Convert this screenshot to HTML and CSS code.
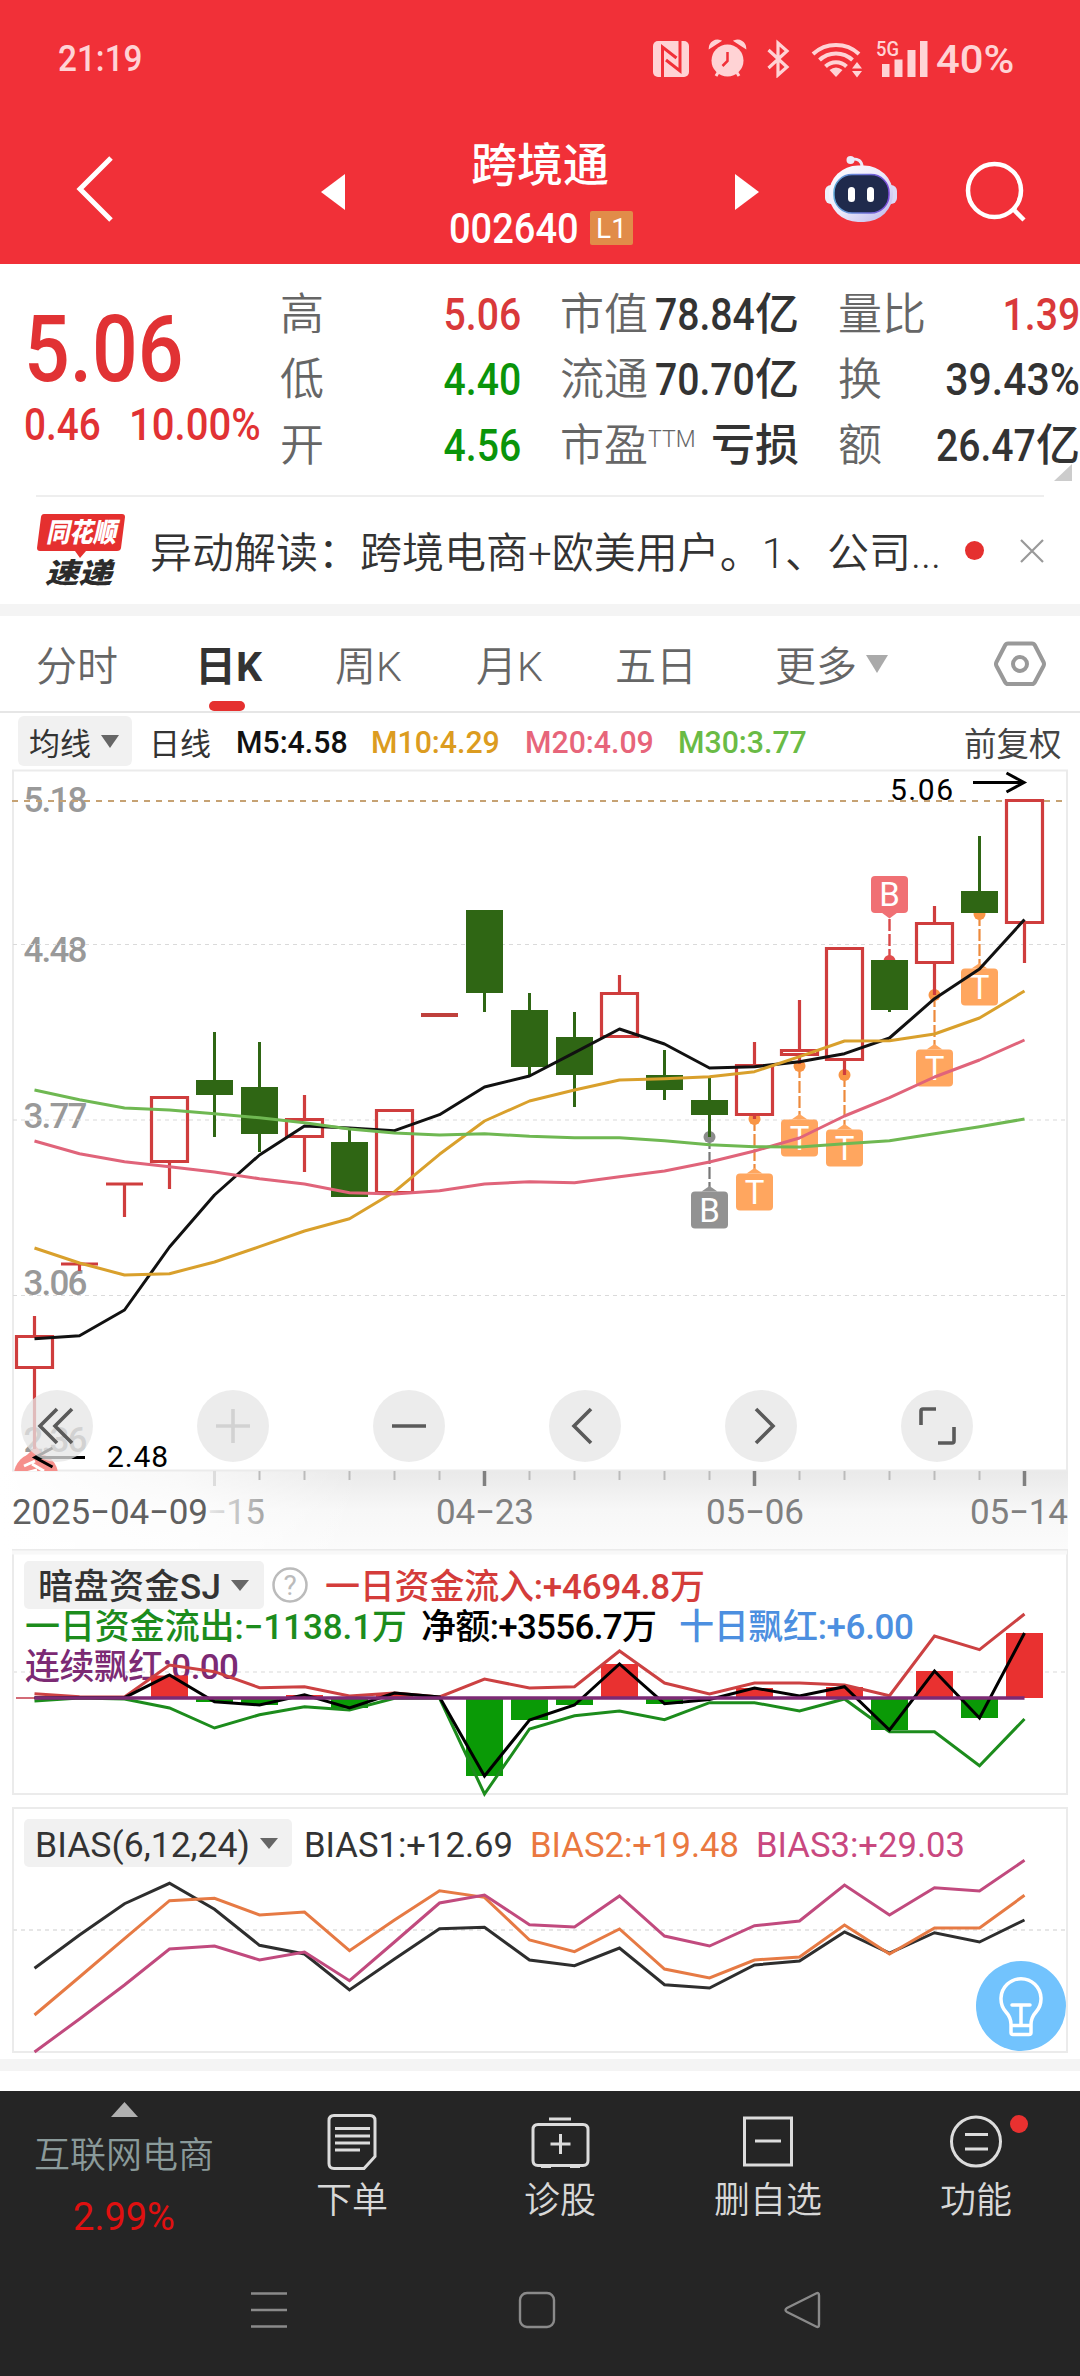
FILE: index.html
```html
<!DOCTYPE html>
<html lang="zh-CN">
<head>
<meta charset="utf-8">
<title>跨境通 002640</title>
<link rel="stylesheet" href="styles.css">
</head>
<body>
<header class="header">
  <div class="status">
    <span class="clock">21:19</span>
    <svg class="status-icons" viewBox="640 0 296 78" width="296" height="78" fill="#ffd3d5">
      <rect x="653" y="41" width="36" height="36" rx="5"/>
      <path d="M662.500 77V47l14 11M680 41V71l-14-11" fill="none" stroke="#f13038" stroke-width="3"/>
      <path d="M709.500 48a8 8 0 0 1 11-7zM745.500 48a8 8 0 0 0-11-7z" stroke="#ffd3d5" stroke-width="1.500"/>
      <circle cx="727.500" cy="60.500" r="16"/>
      <path d="M716 76l3-5M739 76l-3-5" stroke="#ffd3d5" stroke-width="3"/>
      <path d="M727.500 52v9l-5 5" fill="none" stroke="#f13038" stroke-width="2.500"/>
      <path d="M768.500 50L787 67l-9 8V43l9 8-18.500 17" fill="none" stroke="#ffd3d5" stroke-width="3.200"/>
      <g fill="none" stroke="#ffd3d5" stroke-width="4">
        <path d="M813 54a34 34 0 0 1 46 0M819.500 60a24 24 0 0 1 33 0M825.500 66.500a15 15 0 0 1 21 0"/>
      </g>
      <path d="M829.500 70q6.500-5 13 0L836 77z"/>
      <path d="M852 68.500l5-6.500 5 6.500zM852 71l5 6.500 5-6.500z"/>
      <text x="876" y="56" class="net" textLength="23" lengthAdjust="spacingAndGlyphs">5G</text>
      <path d="M882 64h7.500v13H882zM894.500 59.500h8V77h-8zM907.500 50h8v27h-8zM920 41h7.500v36H920z"/>
    </svg>
    <span class="battery">40%</span>
  </div>
  <nav class="nav">
    <svg viewBox="60 78 80 186" width="80" height="186"><path d="M111 158L80 189l31 31" fill="none" stroke="#fff" stroke-width="5"/></svg>
    <svg class="prev" viewBox="290 78 80 186" width="80" height="186"><path d="M345 174v36l-24-18z" fill="#fff"/></svg>
    <div class="title">
      <h1>跨境通</h1>
      <div class="code"><span class="code-num">002640</span><span class="badge">L1</span></div>
    </div>
    <svg viewBox="710 78 80 186" width="80" height="186"><path d="M735 174v36l24-18z" fill="#fff"/></svg>
    <svg viewBox="790 78 130 186" width="130" height="186">
      <defs>
        <linearGradient id="shell" x1="0" y1="0" x2="1" y2="1"><stop offset="0" stop-color="#fff"/><stop offset=".5" stop-color="#eceafb"/><stop offset="1" stop-color="#b9b4ea"/></linearGradient>
        <linearGradient id="visor" x1="0" y1="0" x2="1" y2="0"><stop offset="0" stop-color="#5fa8d8"/><stop offset="1" stop-color="#7a49d8"/></linearGradient>
      </defs>
      <path d="M851 159q11-1 11 8" fill="none" stroke="#eceaf8" stroke-width="3"/>
      <circle cx="850.500" cy="160" r="4" fill="#eceaf8"/>
      <rect x="825" y="185" width="14" height="19" rx="6" fill="#eef0fa"/>
      <rect x="883" y="185" width="14" height="19" rx="6" fill="#dcd9f6"/>
      <rect x="829" y="165.500" width="64" height="56.500" rx="29" fill="url(#shell)"/>
      <rect x="834" y="174.500" width="55" height="38.500" rx="18" fill="#1f2a4c" stroke="url(#visor)" stroke-width="1.500"/>
      <rect x="848" y="187" width="7" height="15" rx="3.500" fill="#fff"/>
      <rect x="867" y="187" width="7" height="15" rx="3.500" fill="#fff"/>
    </svg>
    <svg viewBox="920 78 160 186" width="160" height="186" fill="none" stroke="#fff" stroke-width="4.500"><circle cx="994.500" cy="190.500" r="26.500"/><path d="M1013 209l11 11"/></svg>
  </nav>
</header>

<section class="quote">
  <div class="price">
    <strong>5.06</strong>
    <div class="change"><span class="chg">0.46</span><span class="pct">10.00%</span></div>
  </div>
  <div class="stats">
    <div class="cell"><label>高</label><b class="up"><i>5.06</i></b></div>
    <div class="cell"><label>市值</label><b><i>78.84</i>亿</b></div>
    <div class="cell"><label>量比</label><b class="up"><i>1.39</i></b></div>
    <div class="cell"><label>低</label><b class="down"><i>4.40</i></b></div>
    <div class="cell"><label>流通</label><b><i>70.70</i>亿</b></div>
    <div class="cell"><label>换</label><b><i class="wide">39.43%</i></b></div>
    <div class="cell"><label>开</label><b class="down"><i>4.56</i></b></div>
    <div class="cell"><label>市盈<sup>TTM</sup></label><b>亏损</b></div>
    <div class="cell"><label>额</label><b><i>26.47</i>亿</b></div>
  </div>
  <svg class="corner" viewBox="0 0 18 17" width="18" height="17"><path d="M18 0v17H0z" fill="#ccc"/></svg>
</section>

<section class="news">
  <svg viewBox="36 497 92 107" width="92" height="107">
    <path d="M44 514h78q3 0 3 3l-4 31q-.5 3-4 3H86l-6 7-5-7H40q-3 0-3-3l4-31q.5-3 3-3z" fill="#e5302f"/>
    <text x="46" y="542" class="logo" fill="#fff" textLength="70" lengthAdjust="spacingAndGlyphs">同花顺</text>
    <text x="45" y="583" class="logo big" fill="#2b2b2b" textLength="67" lengthAdjust="spacingAndGlyphs">速递</text>
  </svg>
  <p>异动解读：跨境电商+欧美用户。1、公司...</p>
  <span class="dot"></span>
  <svg viewBox="0 0 24 24" width="24" height="24"><path d="M1 1l22 22M23 1L1 23" stroke="#999" stroke-width="2.200"/></svg>
</section>

<nav class="tabs">
  <span>分时</span><span class="active">日K</span><span>周K</span><span>月K</span><span>五日</span><span>更多</span>
  <svg class="more" viewBox="0 0 22 18" width="22" height="18"><path d="M0 0h22L11 18z" fill="#aaa"/></svg>
  <svg class="gear" viewBox="994 638 52 52" width="52" height="52" fill="none" stroke="#999" stroke-width="4"><path d="M1008 643.500h24q2 0 3 2l8.500 16.500q1 2 0 4L1035 682q-1 2-3 2h-24q-2 0-3-2l-8.500-16q-1-2 0-4l8.500-16.500q1-2 3-2z"/><circle cx="1020" cy="664" r="7"/></svg>
</nav>

<section class="ma">
  <span class="pill">均线<svg viewBox="0 0 18 13" width="18" height="13"><path d="M0 0h18L9 13z" fill="#666"/></svg></span>
  <span class="day">日线</span>
  <span class="val m5">M5:4.58</span><span class="val m10">M10:4.29</span><span class="val m20">M20:4.09</span><span class="val m30">M30:3.77</span>
  <span class="adj">前复权</span>
</section>

<section class="kline">
<svg viewBox="0 769 1080 780" width="1080" height="780">
  <defs>
    <linearGradient id="fadeY" x1="0" y1="0" x2="0" y2="1"><stop offset="0" stop-color="#e9e9e9"/><stop offset=".5" stop-color="#f7f7f7"/><stop offset="1" stop-color="#fbfbfb"/></linearGradient>
    <linearGradient id="fadeX" x1="0" y1="0" x2="1" y2="0"><stop offset="0" stop-color="#fff"/><stop offset=".5" stop-color="#fff" stop-opacity=".7"/><stop offset="1" stop-color="#fff" stop-opacity="0"/></linearGradient>
    <linearGradient id="dateFade" gradientUnits="userSpaceOnUse" x1="205" y1="0" x2="265" y2="0"><stop offset="0" stop-color="#ececec"/><stop offset="1" stop-color="#a5a5a5"/></linearGradient>
    <clipPath id="plot"><rect x="12" y="770" width="1056" height="701"/></clipPath>
    <g id="tag"><path d="M-8-.5L0-6l8 5.500z"/><rect x="-18.500" y="-.5" width="37" height="37" rx="4"/></g>
  </defs>
  <rect x="0" y="1471" width="1068" height="78" fill="url(#fadeY)"/>
  <rect x="0" y="1471" width="360" height="78" fill="url(#fadeX)"/>
  <rect x="13" y="770.500" width="1054" height="700" fill="#fff" stroke="#ebebeb" stroke-width="2"/>
  <g class="axis">
    <text x="23.500" y="812" textLength="64">5.18</text>
    <text x="23.500" y="962" textLength="64">4.48</text>
    <text x="23.500" y="1128" textLength="64">3.77</text>
    <text x="23.500" y="1295" textLength="64">3.06</text>
    <text x="23.500" y="1452" textLength="64">2.36</text>
  </g>
  <g fill="none" stroke="#dadada" stroke-width="1.200" stroke-dasharray="4 4"><path d="M13 944.500H1066M13 1120H1066M13 1295.500H1066"/></g>
  <path d="M12 801H1066" stroke="#c6a273" stroke-width="2" stroke-dasharray="6 6"/>

  <g clip-path="url(#plot)"><circle cx="36" cy="1475" r="22" fill="#f68f8b"/><path d="M26 1456l10-10 8 10z" fill="#f68f8b"/><path d="M24 1466l11-5M22 1474l15-4M32 1464l12 7" stroke="#fff" stroke-width="3"/></g>

  <g stroke-width="2.200" fill="none">
    <g stroke="#ed8a3c" stroke-dasharray="12 3"><path d="M754.500 1119v52M799.500 1066v52M844.500 1075v52M934.500 995v52M979.500 914v52"/></g>
    <path d="M709.500 1137v52" stroke="#777" stroke-dasharray="12 3"/>
    <path d="M889.500 919v42" stroke="#d94848" stroke-dasharray="12 3" stroke-width="2.400"/>
  </g>
  <g fill="#f99545"><circle cx="754.500" cy="1119" r="6"/><circle cx="799.500" cy="1066" r="6"/><circle cx="844.500" cy="1075" r="6"/><circle cx="934.500" cy="995" r="6"/><circle cx="979.500" cy="914" r="6"/></g>
  <circle cx="709.500" cy="1137" r="6" fill="#8c8c8c"/><circle cx="889.500" cy="961" r="6" fill="#e04c4c"/>
  <g fill="#ffa65f"><use href="#tag" x="754.500" y="1174"/><use href="#tag" x="799.500" y="1120"/><use href="#tag" x="844.500" y="1130"/><use href="#tag" x="934.500" y="1050"/><use href="#tag" x="979.500" y="969"/></g>
  <use href="#tag" x="709.500" y="1192" fill="#929292"/>
  <g fill="#f07074"><rect x="871" y="876" width="37" height="37" rx="4"/><path d="M881.500 912.500h16l-8 6z"/></g>
  <g class="mark"><text x="754.500" y="1203.500">T</text><text x="799.500" y="1149.500">T</text><text x="844.500" y="1159.500">T</text><text x="934.500" y="1079.500">T</text><text x="979.500" y="998.500">T</text><text x="709.500" y="1221.500">B</text><text x="889.500" y="906">B</text></g>

  <g fill="#2f6614">
    <path d="M213 1032h3v105h-3zM196 1080h37v15h-37z"/>
    <path d="M258 1042h3v110h-3zM241 1087h37v47h-37z"/>
    <path d="M348 1130h3v14h-3zM331 1142h37v55h-37z"/>
    <path d="M483 990h3v22h-3zM466 910h37v83h-37z"/>
    <path d="M528 993h3v83h-3zM511 1010h37v57h-37z"/>
    <path d="M573 1012h3v95h-3zM556 1037h37v38h-37z"/>
    <path d="M663 1050h3v50h-3zM646 1075h37v15h-37z"/>
    <path d="M708 1078h3v59h-3zM691 1100h37v15h-37z"/>
    <path d="M888 1000h3v12h-3zM871 960h37v50h-37z"/>
    <path d="M978 836h3v60h-3zM961 891h37v22h-37z"/>
  </g>
  <g fill="none" stroke="#cf3d3d" stroke-width="3.200">
    <path d="M34.500 1316v20M34.500 1369v80M16.500 1336.500h36v31h-36z"/>
    <path d="M61 1264h37M79.500 1264v7"/>
    <path d="M106 1184h37M124.500 1184v33"/>
    <path d="M151.500 1097.500h36v64h-36zM169.500 1163v26"/>
    <path d="M286.500 1119.500h36v17h-36zM304.500 1095v24M304.500 1138v34"/>
    <path d="M376.500 1110.500h36v82h-36z"/>
    <path d="M421 1015h37" stroke-width="4" stroke="#bf403c"/>
    <path d="M601.500 993.500h36v43h-36zM619.500 975v18"/>
    <path d="M736.500 1065.500h36v49h-36zM754.500 1042v23M754.500 1115v4"/>
    <path d="M781.500 1050.500h36v4h-36zM799.500 1000v50M799.500 1056v8"/>
    <path d="M826.500 948.500h36v111h-36zM844.500 1061v14"/>
    <path d="M916.500 923.500h36v39h-36zM934.500 906v17M934.500 964v31"/>
    <path d="M1006.500 800.500h36v122h-36zM1024.500 924v39"/>
  </g>
  <g fill="none" stroke-width="3" stroke-linejoin="round">
    <polyline stroke="#111" points="34.500,1338.700 79.500,1335.700 124.500,1310 169.500,1247 214.500,1195 259.500,1155 304.500,1126 349.500,1128 394.500,1130.700 439.500,1114.700 484.500,1087 529.500,1076 574.500,1052.700 619.500,1029 664.500,1044 709.500,1068 754.500,1066.700 799.500,1061.700 844.500,1053.700 889.500,1038 934.500,998.700 979.500,969 1024.500,919.500"/>
    <polyline stroke="#d9a02c" points="34.500,1248 79.500,1263 124.500,1275 169.500,1273.700 214.500,1262 259.500,1246.700 304.500,1231 349.500,1218.700 394.500,1191.700 439.500,1154.300 484.500,1121 529.500,1101 574.500,1090 619.500,1080 664.500,1078.700 709.500,1076.700 754.500,1071.700 799.500,1056.700 844.500,1041 889.500,1040.700 934.500,1034 979.500,1018 1024.500,991"/>
    <polyline stroke="#e0647a" points="34.500,1141 79.500,1153.700 124.500,1161.700 169.500,1166.700 214.500,1172 259.500,1178.700 304.500,1184 349.500,1192.700 394.500,1194 439.500,1190.700 484.500,1184 529.500,1181.700 574.500,1182.700 619.500,1176.700 664.500,1171 709.500,1162 754.500,1151 799.500,1138 844.500,1116 889.500,1097.700 934.500,1077 979.500,1060 1024.500,1040"/>
    <polyline stroke="#6fb852" points="34.500,1090 79.500,1099.700 124.500,1108 169.500,1110 214.500,1113.700 259.500,1117.700 304.500,1122.700 349.500,1129 394.500,1133 439.500,1135 484.500,1133.700 529.500,1136.300 574.500,1137.700 619.500,1137.700 664.500,1140.700 709.500,1144.700 754.500,1146.700 799.500,1147 844.500,1143.700 889.500,1140.700 934.500,1133.700 979.500,1126.700 1024.500,1119"/>
  </g>
  <g class="extreme"><text x="890" y="800" textLength="63">5.06</text><text x="107" y="1467" textLength="61">2.48</text></g>
  <g fill="none" stroke="#000" stroke-width="3"><path d="M973 782.500h51M1006.500 773l17.500 9.500-17.500 9.500"/><path d="M85 1457.500H35M52.500 1448L35 1457.500l17.500 9.500"/></g>

  <path d="M259.500 1471v9M304.500 1471v9M349.500 1471v9M394.500 1471v9M439.500 1471v9M529.500 1471v9M574.500 1471v9M619.500 1471v9M664.500 1471v9M709.500 1471v9M799.500 1471v9M844.500 1471v9M889.500 1471v9M934.500 1471v9M979.500 1471v9" stroke="#bbb" stroke-width="2"/>
  <path d="M214.500 1471v15" stroke="#ddd" stroke-width="3"/>
  <path d="M484.500 1471v15M754.500 1471v15M1024.500 1471v15" stroke="#808080" stroke-width="3.500"/>
  <g class="dates">
    <text x="12" y="1524" textLength="196" fill="#606060">2025−04−09</text>
    <text x="207" y="1524" textLength="58" fill="url(#dateFade)">−15</text>
    <text x="436" y="1524" textLength="98">04−23</text>
    <text x="706" y="1524" textLength="98">05−06</text>
    <text x="970" y="1524" textLength="98">05−14</text>
  </g>
</svg>
<div class="tools">
  <button><svg viewBox="-36 -36 72 72"><path d="M0-17L-17 0 0 17M15-17L-2 0 15 17"/></svg></button>
  <button class="off"><svg viewBox="-36 -36 72 72"><path d="M-17 0h34M0-17v34"/></svg></button>
  <button><svg viewBox="-36 -36 72 72"><path d="M-17 0h34"/></svg></button>
  <button><svg viewBox="-36 -36 72 72"><path d="M6-17L-11 0 6 17"/></svg></button>
  <button><svg viewBox="-36 -36 72 72"><path d="M-5-17L12 0-5 17"/></svg></button>
  <button><svg viewBox="-36 -36 72 72"><path d="M-16-1v-14q0-2 2-2H-1M17 1v14q0 2-2 2H1"/></svg></button>
</div>
</section>

<section class="panel">
<svg viewBox="0 1549 1080 258" width="1080" height="258">
  <rect x="13" y="1550" width="1054" height="244" fill="#fff" stroke="#ebebeb" stroke-width="2"/>
  <path d="M12 1552.500h1055" stroke="#f8f8f8" stroke-width="4"/>
  <path d="M13 1672H1066" stroke="#ececec" stroke-width="2" stroke-dasharray="4 4"/>
  <rect x="24" y="1561" width="240" height="48" rx="5" fill="#f1f1f1"/>
  <text x="38" y="1599" class="ind" textLength="183" fill="#333">暗盘资金SJ</text>
  <path d="M231 1580h18l-9 11z" fill="#666"/>
  <circle cx="290" cy="1585" r="16.500" fill="none" stroke="#bbb" stroke-width="2.500"/>
  <text x="290" y="1595" class="help">?</text>
  <g class="ind">
    <text x="325" y="1599" textLength="380" fill="#d43c3a">一日资金流入:+4694.8万</text>
    <text x="25" y="1638.500" textLength="382" fill="#1c8c1c">一日资金流出:−1138.1万</text>
    <text x="421" y="1638.500" textLength="236" fill="#000">净额:+3556.7万</text>
    <text x="679" y="1638.500" textLength="235" fill="#4c8fe0">十日飘红:+6.00</text>
    <text x="25" y="1678.500" textLength="214" fill="#7c2a74">连续飘红:0.00</text>
  </g>
  <g fill="#e93130"><path d="M151 1675.500h37V1698h-37zM286 1695h37v3h-37zM376 1694h37v4h-37zM601 1664h37v34h-37zM736 1688h37v10h-37zM826 1687h37v11h-37zM916 1671h37v27h-37zM1006 1633h37v65h-37z"/></g>
  <g fill="#0a9a06"><path d="M196 1698h37v4h-37zM241 1698h37v7h-37zM331 1698h37v10h-37zM466 1698h37v78h-37zM511 1698h37v22h-37zM556 1698h37v7h-37zM646 1698h37v6h-37zM871 1698h37v32h-37zM961 1698h37v20h-37z"/></g>
  <path d="M16 1698H70" stroke="#c43a4a" stroke-width="1.500"/>
  <g fill="none" stroke-width="3">
    <polyline stroke="#cc4142" points="34.500,1693.700 79.500,1696.700 124.500,1697 169.500,1665 214.500,1671.700 259.500,1687.700 304.500,1686.700 349.500,1696 394.500,1693 439.500,1697 484.500,1679 529.500,1688 574.500,1686.700 619.500,1651 664.500,1683 709.500,1694 754.500,1683 799.500,1683 844.500,1685 889.500,1695.700 934.500,1636 979.500,1649.700 1024.500,1614"/>
    <polyline stroke="#1c8c1c" points="34.500,1701 79.500,1698 124.500,1699 169.500,1708 214.500,1728 259.500,1714.700 304.500,1706.700 349.500,1710 394.500,1698.300 439.500,1698 484.500,1794 529.500,1729 574.500,1715.700 619.500,1711 664.500,1719.700 709.500,1702.700 754.500,1702.700 799.500,1711 844.500,1699 889.500,1731.700 934.500,1731.700 979.500,1765.700 1024.500,1719"/>
    <polyline stroke="#000" points="34.500,1697.700 124.500,1697.700 169.500,1675 214.500,1701.700 259.500,1705 304.500,1694.700 349.500,1708 394.500,1693 439.500,1697 484.500,1776 529.500,1720 574.500,1705 619.500,1664 664.500,1703.700 709.500,1699.500 754.500,1688 799.500,1696 844.500,1686.700 889.500,1730 934.500,1671 979.500,1718 1024.500,1633"/>
    <path d="M34.500 1698h990" stroke="#7c2a74" stroke-width="3.500"/>
  </g>
</svg>
</section>

<section class="panel">
<svg viewBox="0 1807 1080 252" width="1080" height="252">
  <rect x="13" y="1808" width="1054" height="244" fill="#fff" stroke="#ebebeb" stroke-width="2"/>
  <path d="M13 1930H1066" stroke="#e6e6e6" stroke-width="2" stroke-dasharray="4 4"/>
  <rect x="24" y="1819" width="268" height="48" rx="5" fill="#f1f1f1"/>
  <path d="M260 1838h18l-9 11z" fill="#666"/>
  <g class="ind latin">
    <text x="35" y="1856.500" textLength="215" lengthAdjust="spacingAndGlyphs" fill="#333">BIAS(6,12,24)</text>
    <text x="304" y="1856.500" textLength="209" lengthAdjust="spacingAndGlyphs" fill="#333">BIAS1:+12.69</text>
    <text x="530" y="1856.500" textLength="209" lengthAdjust="spacingAndGlyphs" fill="#ea7840">BIAS2:+19.48</text>
    <text x="756" y="1856.500" textLength="209" lengthAdjust="spacingAndGlyphs" fill="#c9487f">BIAS3:+29.03</text>
  </g>
  <g fill="none" stroke-width="3">
    <polyline stroke="#2e2e2e" points="34.500,1968.300 79.500,1935 124.500,1903.700 169.500,1883.300 214.500,1909.300 259.500,1945.300 304.500,1954 349.500,1990 394.500,1959 439.500,1928.700 484.500,1927.300 529.500,1960 574.500,1965.700 619.500,1948 664.500,1984.700 709.500,1988 754.500,1965 799.500,1961 844.500,1932 889.500,1953 934.500,1932.700 979.500,1942 1024.500,1920"/>
    <polyline stroke="#e67a44" points="34.500,2015 79.500,1977 124.500,1938.700 169.500,1900.700 214.500,1898.300 259.500,1915 304.500,1912 349.500,1950.700 394.500,1920 439.500,1890.700 484.500,1897.300 529.500,1940 574.500,1951.700 619.500,1929 664.500,1969 709.500,1978 754.500,1960 799.500,1957 844.500,1925 889.500,1954 934.500,1928 979.500,1928 1024.500,1895.300"/>
    <polyline stroke="#c14a7e" points="34.500,2052 79.500,2019 124.500,1985 169.500,1949 214.500,1946 259.500,1960 304.500,1952 349.500,1980.700 394.500,1942 439.500,1903 484.500,1895 529.500,1924.700 574.500,1927 619.500,1896 664.500,1936 709.500,1946 754.500,1925.700 799.500,1921 844.500,1885 889.500,1915 934.500,1887.700 979.500,1891 1024.500,1860.300"/>
  </g>
  <circle cx="1021" cy="2006" r="45" fill="#72c3fd"/>
  <g fill="none" stroke="#fff" stroke-width="3.500" stroke-linecap="round"><path d="M1011 2024.500q0-7-5-12.500a20 20 0 1 1 30 0q-5 5.500-5 12.500v8q0 2-2 2h-16q-2 0-2-2zM1011 2025.500h20M1012 2005h18M1021 2005v20"/></g>
</svg>
</section>
<div class="band"></div>

<footer class="footer">
  <div class="bar">
    <div class="sector">
      <svg viewBox="0 0 27 15" width="27" height="15"><path d="M13.500 0L27 15H0z" fill="#b0b0b0"/></svg>
      <span class="name">互联网电商</span><span class="rate">2.99%</span>
    </div>
    <div class="item"><svg viewBox="322 2108 60 66"><path d="M334 2115.500h36q5 0 5 5v36l-11 12H334q-5 0-5-5v-43q0-5 5-5zM335 2128.500h35M335 2136h35M335 2143h35M335 2150h25"/></svg><span>下单</span></div>
    <div class="item"><svg viewBox="529 2108 60 66"><path d="M548 2119h22" /><path d="M537 2124.500h45q5 0 5 5v31q0 5-5 5h-45q-5 0-5-5v-31q0-5 5-5zM559.500 2134v20M549.500 2144h20M540 2166.500h10M569 2166.500h10"/></svg><span>诊股</span></div>
    <div class="item"><svg viewBox="737 2108 60 66"><path d="M743.500 2118h47v47h-47zM754 2141h26"/></svg><span>删自选</span></div>
    <div class="item"><svg viewBox="945 2108 60 66"><circle cx="975" cy="2141.500" r="24.500"/><path d="M964 2134.500h23M964 2149h23"/></svg><span>功能</span><em></em></div>
  </div>
  <svg viewBox="0 2250 1080 126" width="1080" height="126" fill="none" stroke="#8a8a8a" stroke-width="2.400"><path d="M251 2293.500h36M251 2310h36M251 2326.500h36"/><rect x="520" y="2293" width="34" height="34" rx="7"/><path d="M816 2293.500q3-1.500 3 2v29q0 3.500-3 2l-29-14.500q-3-2 0-4z"/></svg>
</footer>
</body>
</html>
```
FILE: styles.css
```css
* { box-sizing: border-box; }
body { margin: 0; width: 1080px; background: #fff; font-family: Roboto, "Noto Sans CJK SC", sans-serif; color: #333; }
svg { display: block; flex: none; }
h1, p { margin: 0; }

.header { height: 264px; background: #f13038; color: #fff; }
.status { height: 78px; display: flex; padding-left: 58px; color: #ffd3d5; font-size: 37px; font-weight: 500; line-height: 118px; }
.clock { width: 582px; transform: scaleX(.9); transform-origin: left; }
.battery { transform: scaleX(1.1); transform-origin: left; font-size: 38px; line-height: 120px; }
.net { font: 500 21px Roboto, sans-serif; }
.nav { display: flex; height: 186px; padding-left: 60px; }
.prev { margin-left: 150px; }
.title { width: 340px; padding-top: 57px; display: flex; flex-direction: column; align-items: center; }
.title h1 { font-size: 46px; font-weight: 500; line-height: 60px; }
.code { display: flex; align-items: center; height: 64px; margin-top: 1px; padding-left: 2px; gap: 12px; }
.code-num { width: 129px; font-size: 42px; transform: scaleX(.905); transform-origin: left; font-weight: 500; }
.badge { width: 43px; height: 34px; background: #e18c49; border-radius: 2px; font-size: 28px; line-height: 35px; text-align: center; }

.quote { position: relative; height: 233px; display: flex; padding-top: 18px; }
.quote::after { content: ""; position: absolute; left: 36px; right: 36px; bottom: 0; height: 2px; background: #eee; }
.price { width: 280px; padding-left: 24px; color: #e13234; }
.price strong { display: block; font-size: 93px; font-weight: 500; line-height: 136px; transform: scaleX(.865); transform-origin: left; }
.change { display: flex; font-size: 44px; line-height: 44px; margin-top: -15px; font-weight: 500; }
.change span { transform: scaleX(.88); transform-origin: left; }
.change .pct { transform: scaleX(.91); }
.chg { width: 105px; }
.stats { display: grid; grid-template-columns: 241px 239px 242px; grid-auto-rows: 65.500px; column-gap: 39px; }
.cell { display: flex; justify-content: space-between; align-items: center; white-space: nowrap; font-size: 44px; line-height: 66px; }
.cell label { color: #666; font-weight: 350; }
.cell b { font-weight: 500; }
.cell i { display: inline-block; font-style: normal; font-size: 45px; margin-left: -15px; transform: scaleX(.87); transform-origin: right; }
.cell .wide { transform: scaleX(.91); }
.cell sup { font-size: 23px; vertical-align: 14px; line-height: 0; }
.up { color: #d9393a; }
.down { color: #0a940a; }
.corner { position: absolute; left: 1054px; bottom: 16px; }

.news { height: 107px; display: flex; align-items: center; padding-left: 36px; }
.news p { width: 815px; margin-left: 22px; margin-top: -3px; font-size: 42px; white-space: nowrap; font-weight: 350; }
.logo { font: italic 900 27px "Noto Sans CJK SC", sans-serif; }
.logo.big { font-size: 28px; }
.dot { width: 19px; height: 19px; border-radius: 50%; background: #e5302f; margin-right: 36px; }

.tabs { height: 109px; border-top: 12px solid #f4f4f4; border-bottom: 2px solid #e6e6e6; display: flex; align-items: center; position: relative; color: #666; font-size: 41px; font-weight: 350; white-space: nowrap; padding-left: 36px; }
.tabs span { width: 140px; position: relative; line-height: 95px; padding-top: 4px; height: 95px; line-height: 95px; }
.tabs span:nth-child(1) { width: 159px; }
.tabs span:nth-child(3) { width: 141px; }
.tabs span:nth-child(4) { width: 139px; }
.tabs span:nth-child(5) { width: 160px; }
.tabs span:nth-child(6) { width: 91px; }
.tabs .active { color: #333; font-weight: 700; }
.tabs .active::after { content: ""; position: absolute; left: 14px; bottom: 0; width: 36px; height: 10px; border-radius: 5px; background: #e5302f; }
.gear { position: absolute; left: 994px; top: 22px; }

.ma { height: 56px; display: flex; align-items: center; padding-left: 18px; font-size: 31px; white-space: nowrap; }
.pill { width: 114px; height: 50px; background: #f1f1f1; border-radius: 6px; display: flex; align-items: center; gap: 10px; padding-left: 11px; }
.day { margin-left: 17px; width: 87px; }
.val { font-size: 32px; font-weight: 500; padding-top: 1px; transform: scaleX(.945); transform-origin: left; width: 153.500px; }
.m5 { color: #111; width: 135px; }
.m10 { color: #dc9c20; }
.m20 { color: #e7657a; }
.m30 { color: #6abb45; width: 286px; }
.adj { color: #444; font-size: 32.500px; }

.kline { position: relative; }
.kline text, .panel text { font-family: Roboto, "Noto Sans CJK SC", sans-serif; }
.axis { font-size: 35px; fill: #999; font-weight: 500; }
.mark { font-size: 33px; fill: #fff; text-anchor: middle; }
.extreme { font-size: 30px; }
.dates { font-size: 35px; fill: #808080; font-weight: 450; }
.tools { position: absolute; left: 21px; top: 621px; display: flex; gap: 104px; }
.tools button { width: 72px; height: 72px; padding: 0; border: 0; border-radius: 50%; background: rgba(230, 230, 230, .75); }
.tools path { fill: none; stroke: #5a5a5a; stroke-width: 3.600; }
.tools .off path { stroke: #d2d2d2; }
.ind { font-size: 35px; font-weight: 500; }
.ind.latin { font-weight: 400; }
.help { font-size: 28px; fill: #bbb; text-anchor: middle; }
.band { height: 12px; background: #f4f4f4; margin-bottom: 20px; }

.footer { height: 285px; background: #252525; }
.bar { height: 159px; display: flex; color: #d8d8d8; font-size: 36px; }
.sector { width: 248px; display: flex; flex-direction: column; align-items: center; padding-top: 11px; }
.name { color: #8a9a9a; line-height: 50px; margin-top: 14px; font-weight: 350; }
.rate { color: #e01010; font-size: 38px; line-height: 50px; margin-top: 11px; }
.item { flex: 1; display: flex; flex-direction: column; align-items: center; padding-top: 17px; position: relative; font-weight: 350; }
.item svg { width: 60px; height: 66px; fill: none; stroke: #dcdcdc; stroke-width: 3; }
.item span { line-height: 50px; margin-top: 2px; }
.item em { position: absolute; left: 138px; top: 24px; width: 18px; height: 18px; border-radius: 50%; background: #e93130; }
```
